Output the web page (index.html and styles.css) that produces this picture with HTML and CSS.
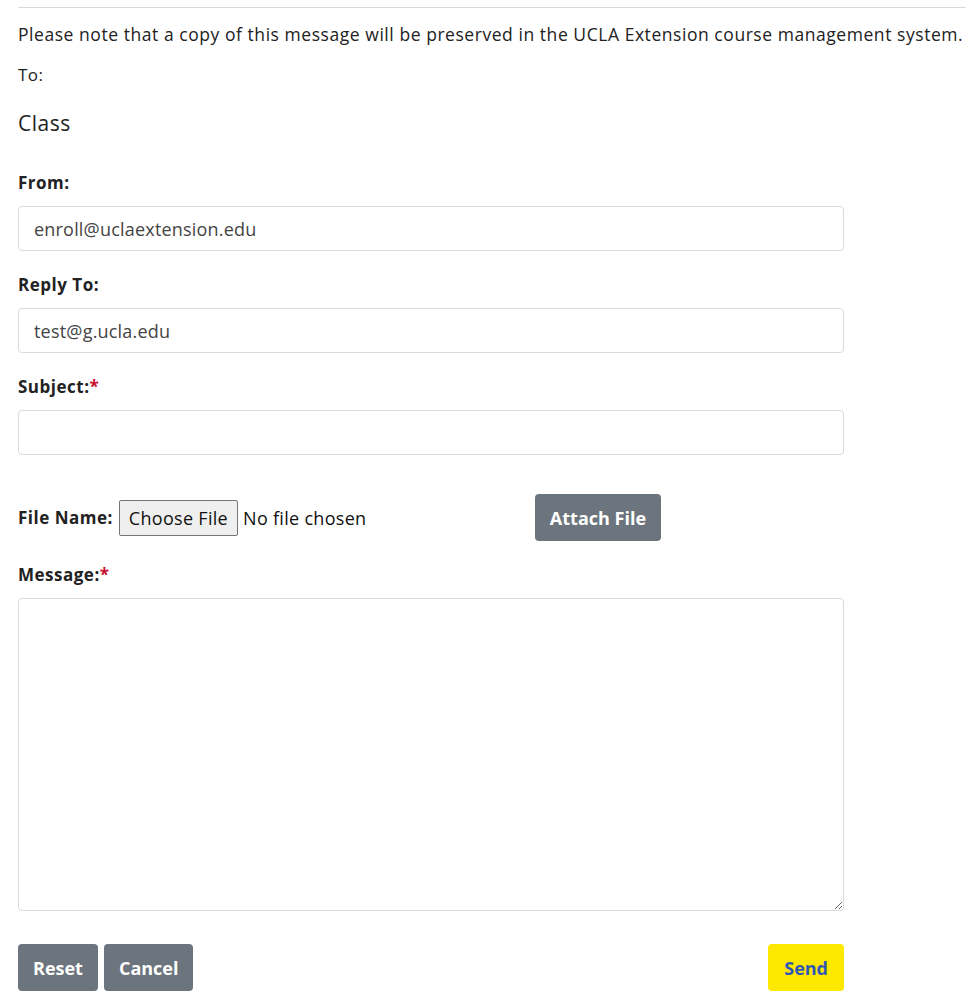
FILE: index.html
```html
<!DOCTYPE html>
<html lang="en">
<head>
    <meta charset="UTF-8">
    <meta name="viewport" content="width=device-width, initial-scale=1.0">
    <title>Send Message</title>
    <link rel="stylesheet" href="styles.css">
</head>
<body>
    <div class="page">
        <p class="note">Please note that a copy of this message will be preserved in the UCLA Extension course management system.</p>
        <form class="mail-form">
            <div class="to-label">To:</div>
            <div class="to-value">Class</div>

            <label class="field-label" for="from">From:</label>
            <input class="field" type="text" id="from" value="enroll@uclaextension.edu">

            <label class="field-label" for="reply">Reply To:</label>
            <input class="field" type="text" id="reply" value="test@g.ucla.edu">

            <label class="field-label" for="subject">Subject:<span class="req">*</span></label>
            <input class="field" type="text" id="subject">

            <div class="file-row">
                <label class="file-label" for="upload">File Name:</label>
                <input class="file-input" type="file" id="upload">
                <button type="button" class="btn btn-grey">Attach File</button>
            </div>

            <label class="field-label" for="message">Message:<span class="req">*</span></label>
            <textarea class="field message" id="message"></textarea>

            <div class="actions">
                <button type="reset" class="btn btn-grey">Reset</button>
                <button type="button" class="btn btn-grey">Cancel</button>
                <button type="submit" class="btn btn-send">Send</button>
            </div>
        </form>
    </div>
</body>
</html>
```

FILE: styles.css
```css
* {
    margin: 0;
    padding: 0;
    box-sizing: border-box;
}
body {
    font-family: "Open Sans", Lato, sans-serif;
    color: #222;
    background: #fff;
}
.page {
    padding: 7px 9px 0 18px;
}
.note {
    border-top: 1px solid #d9d9d9;
    padding-top: 15px;
    font-size: 17.5px;
    letter-spacing: 0.55px;
    line-height: 22px;
}
.mail-form {
    width: 826px;
    display: flex;
    flex-direction: column;
}
.to-label {
    margin-top: 19px;
    font-size: 17px;
    letter-spacing: 0.5px;
    line-height: 22px;
}
.to-value {
    margin-top: 25px;
    font-size: 21px;
    letter-spacing: 0.5px;
    line-height: 24px;
}
.field-label {
    margin-top: 37px;
    font-size: 17px;
    font-weight: 700;
    letter-spacing: 0.5px;
    line-height: 22px;
}
.field-label + .field {
    margin-top: 12px;
}
.field ~ .field-label {
    margin-top: 23px;
}
.req {
    color: #c8102e;
}
.field {
    height: 45px;
    padding: 0 15px;
    border: 1px solid #d6dbe0;
    border-radius: 4px;
    font-family: "Open Sans", Lato, sans-serif;
    font-size: 18px;
    letter-spacing: 0.2px;
    color: #444;
    background: #fff;
}
.file-row {
    margin-top: 39px;
    display: flex;
    align-items: center;
}
.file-label {
    font-size: 17px;
    font-weight: 700;
    letter-spacing: 0.5px;
    margin-right: 6px;
}
.file-input {
    width: 416px;
    font-family: "Open Sans", Arial, sans-serif;
    font-size: 18px;
    letter-spacing: 0.3px;
    color: #111;
}
.file-input::file-selector-button {
    font-family: "Open Sans", Arial, sans-serif;
    font-size: 18px;
    letter-spacing: 0.3px;
    height: 36px;
    padding: 0 9px;
    margin-right: 5px;
    background: #efefef;
    border: 1px solid #767676;
    border-radius: 2px;
    color: #111;
}
.message {
    height: 313px;
    resize: vertical;
    padding: 10px 15px;
}
.actions {
    margin-top: 33px;
    display: flex;
    gap: 6px;
}
.btn {
    height: 47px;
    padding: 0 15px;
    border: none;
    border-radius: 4px;
    font-family: "Open Sans", Lato, sans-serif;
    font-size: 18px;
    font-weight: 700;
    cursor: pointer;
}
.btn-grey {
    background: #6c757d;
    color: #fff;
}
.btn-send {
    margin-left: auto;
    padding: 0 16px;
    background: #ffe800;
    color: #3157b5;
}
```
